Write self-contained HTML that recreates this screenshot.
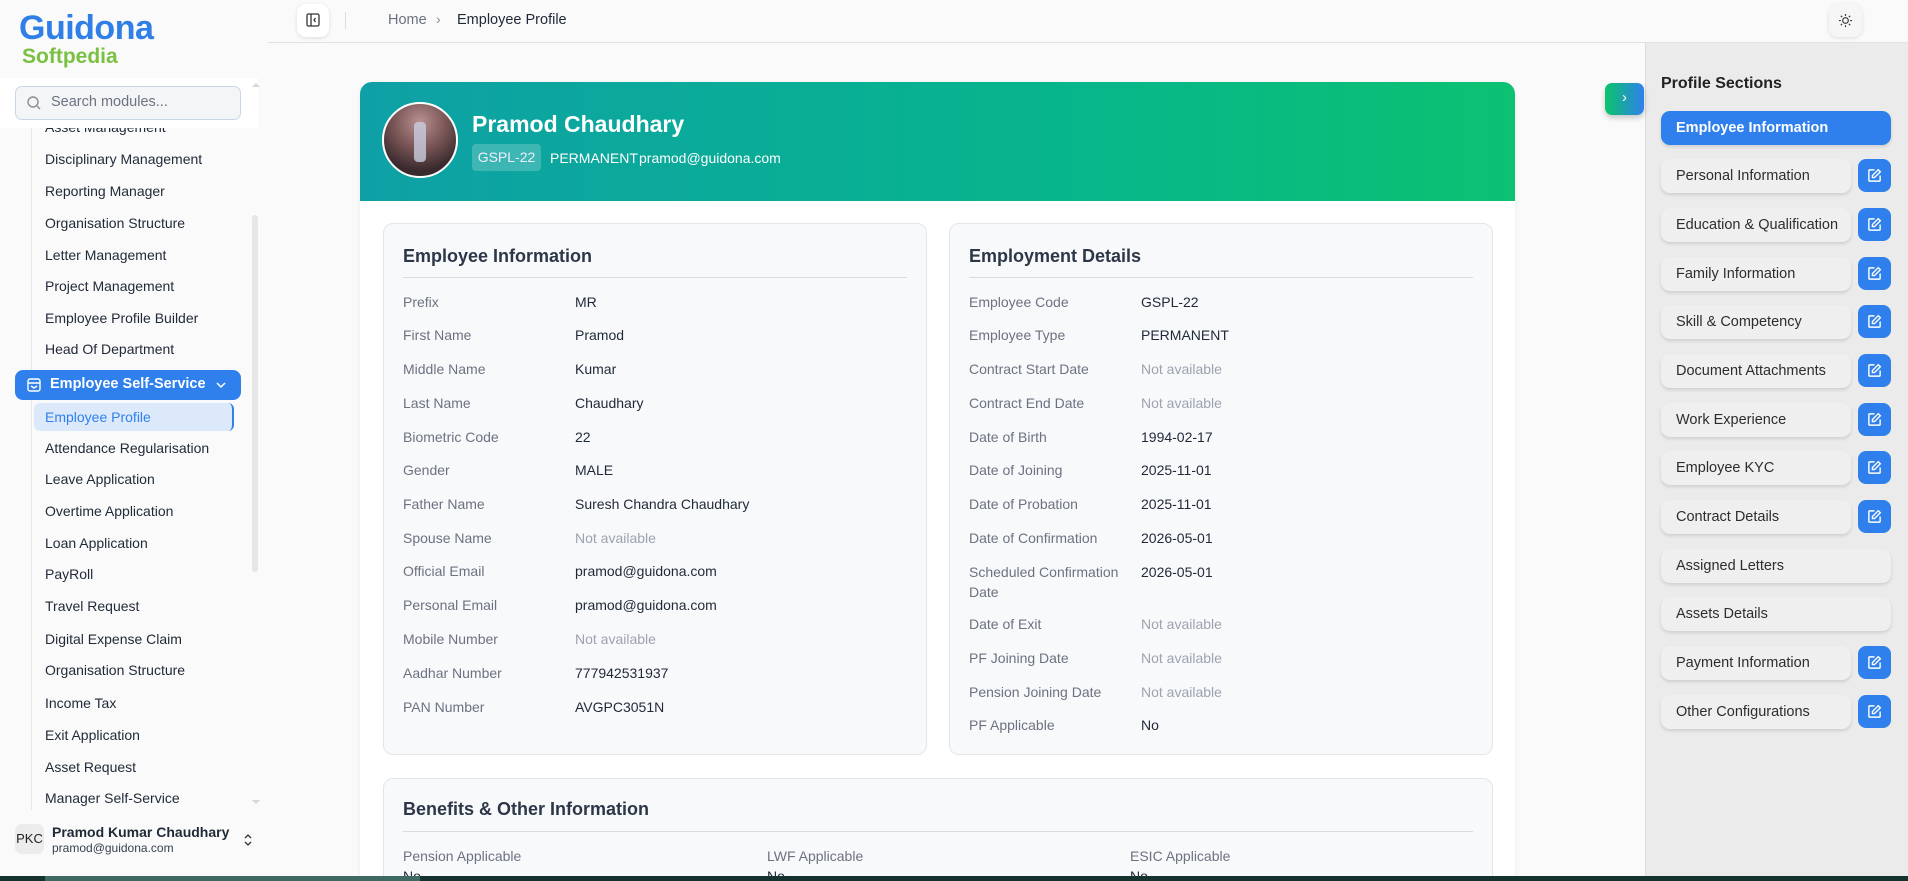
<!DOCTYPE html>
<html><head><meta charset="utf-8"><style>
*{box-sizing:border-box;margin:0;padding:0}
html{width:1908px;height:881px;overflow:hidden}
body{width:1908px;height:881px;overflow:hidden;background:#fafafa;font-family:"Liberation Sans",sans-serif;position:relative;color:#1f2937}
.a{position:absolute;white-space:nowrap}
.si{position:absolute;left:45px;font-size:14px;color:#1f2937;line-height:20px}
.lab{position:absolute;font-size:14px;color:#6b7280;line-height:20px}
.val{position:absolute;font-size:14px;color:#1f2937;line-height:20px}
.na{color:#9ca3af}
.card{position:absolute;background:#f8f9fb;border:1px solid #e3e5e8;border-radius:10px}
.ct{position:absolute;font-size:18px;font-weight:bold;color:#2d3748}
.hr{position:absolute;height:1px;background:#d8dbe0}
.ps{position:absolute;left:1661px;height:34px;border-radius:9px;background:#efefef;box-shadow:0 2px 3px rgba(0,0,0,.12);font-size:14.5px;color:#2d2d2d;line-height:34px;padding-left:15px}
.eb{position:absolute;left:1858px;width:33px;height:33px;border-radius:8px;background:#2f80ed;display:flex;align-items:center;justify-content:center}
</style></head><body>
<!-- sidebar -->
<div class="a" style="left:19px;top:9px;font-size:34px;font-weight:bold;color:#2f7fe6;letter-spacing:-0.5px">Guidona</div>
<div class="a" style="left:22px;top:45px;font-size:21px;font-weight:bold;color:#7ac143">Softpedia</div>
<div class="a" style="left:31px;top:128px;width:1px;height:682px;background:#e3e6ea"></div>
<div class="si" style="top:117px">Asset Management</div>
<div class="a" style="left:0;top:78px;width:258px;height:50px;background:#fff"></div>
<div class="a" style="left:15px;top:86px;width:226px;height:34px;border:1px solid #c9d6ea;border-radius:7px;background:#f4f5f7"></div>
<svg class="a" style="left:26px;top:95px" width="16" height="16" viewBox="0 0 16 16" fill="none" stroke="#8a8f98" stroke-width="1.4"><circle cx="7" cy="7" r="5"/><path d="M11 11l3 3"/></svg>
<div class="a" style="left:51px;top:94px;font-size:14.5px;color:#6b7280">Search modules...</div>
<div class="a" style="left:252px;top:83px;width:0;height:0;border-left:4px solid transparent;border-right:4px solid transparent;border-bottom:4px solid #d6d6d6"></div>
<div class="a" style="left:252px;top:215px;width:6px;height:357px;background:#e6e6e6;border-radius:3px"></div>
<div class="a" style="left:252px;top:800px;width:0;height:0;border-left:4px solid transparent;border-right:4px solid transparent;border-top:4px solid #d6d6d6"></div>
<div class="si" style="top:149px">Disciplinary Management</div>
<div class="si" style="top:181px">Reporting Manager</div>
<div class="si" style="top:213px">Organisation Structure</div>
<div class="si" style="top:245px">Letter Management</div>
<div class="si" style="top:276px">Project Management</div>
<div class="si" style="top:308px">Employee Profile Builder</div>
<div class="si" style="top:339px">Head Of Department</div>
<div class="a" style="left:15px;top:370px;width:226px;height:30px;background:#2f80ed;border-radius:8px"></div>
<svg class="a" style="left:26px;top:377px" width="16" height="16" viewBox="0 0 16 16" fill="none" stroke="#fff" stroke-width="1.4"><rect x="2" y="2" width="12" height="12" rx="2"/><path d="M2 6h12M5 9l3 2 3-2"/></svg>
<div class="a" style="left:50px;top:376px;font-size:14.5px;font-weight:bold;color:#fff">Employee Self-Service</div>
<svg class="a" style="left:215px;top:380px" width="12" height="10" viewBox="0 0 12 10" fill="none" stroke="#fff" stroke-width="1.5"><path d="M2 3l4 4 4-4"/></svg>
<div class="a" style="left:34px;top:403px;width:200px;height:28px;background:#dce9fb;border-radius:6px;border-right:2px solid #2f80ed"></div>
<div class="si" style="top:407px;color:#2f80ed">Employee Profile</div>
<div class="si" style="top:438px">Attendance Regularisation</div>
<div class="si" style="top:469px">Leave Application</div>
<div class="si" style="top:501px">Overtime Application</div>
<div class="si" style="top:533px">Loan Application</div>
<div class="si" style="top:564px">PayRoll</div>
<div class="si" style="top:596px">Travel Request</div>
<div class="si" style="top:629px">Digital Expense Claim</div>
<div class="si" style="top:660px">Organisation Structure</div>
<div class="si" style="top:693px">Income Tax</div>
<div class="si" style="top:725px">Exit Application</div>
<div class="si" style="top:757px">Asset Request</div>
<div class="si" style="top:788px">Manager Self-Service</div>
<div class="a" style="left:0;top:812px;width:268px;height:64px;background:#fafafa"></div>
<div class="a" style="left:15px;top:824px;width:29px;height:30px;background:#ececec;border-radius:7px;font-size:13px;line-height:30px;text-align:center;color:#222">PKC</div>
<div class="a" style="left:52px;top:824px;font-size:14px;font-weight:bold;color:#1f2937">Pramod Kumar Chaudhary</div>
<div class="a" style="left:52px;top:841px;font-size:12px;color:#374151">pramod@guidona.com</div>
<svg class="a" style="left:243px;top:832px" width="10" height="16" viewBox="0 0 10 16" fill="none" stroke="#333" stroke-width="1.3"><path d="M2 6l3-3 3 3M2 10l3 3 3-3"/></svg>
<!-- header -->
<div class="a" style="left:268px;top:42px;width:1640px;height:1px;background:#e2e2e2"></div>
<div class="a" style="left:297px;top:4px;width:32px;height:33px;background:#fff;border-radius:9px;box-shadow:0 1px 4px rgba(0,0,0,.12)"></div>
<svg class="a" style="left:306px;top:13px" width="14" height="14" viewBox="0 0 14 14" fill="none" stroke="#333" stroke-width="1.3"><rect x="1" y="1" width="12" height="12" rx="1.5"/><path d="M5 1v12M9.5 5L8 7l1.5 2"/></svg>
<div class="a" style="left:345px;top:12px;width:1px;height:17px;background:#ddd"></div>
<div class="a" style="left:388px;top:12px;font-size:14.5px;color:#6b7280">Home</div>
<div class="a" style="left:436px;top:11px;font-size:14px;color:#888">›</div>
<div class="a" style="left:457px;top:12px;font-size:14.5px;color:#1f2937">Employee Profile</div>
<div class="a" style="left:1829px;top:4px;width:33px;height:33px;background:#f6f6f6;border-radius:9px;box-shadow:0 1px 4px rgba(0,0,0,.12)"></div>
<svg class="a" style="left:1838px;top:13px" width="15" height="15" viewBox="0 0 16 16" fill="none" stroke="#333" stroke-width="1.2"><circle cx="8" cy="8" r="3"/><path d="M8 1v2M8 13v2M1 8h2M13 8h2M3 3l1.4 1.4M11.6 11.6L13 13M3 13l1.4-1.4M11.6 4.4L13 3"/></svg>
<!-- right panel -->
<div class="a" style="left:1645px;top:43px;width:263px;height:838px;background:#ebebeb;border-left:1px solid #dcdcdc"></div>
<div class="a" style="left:1605px;top:83px;width:39px;height:32px;border-radius:7px;background:linear-gradient(90deg,#0bc46a,#2f80ed);box-shadow:0 3px 6px rgba(0,0,0,.2);color:#fff;font-size:15px;text-align:center;line-height:30px">›</div>
<div class="a" style="left:1661px;top:75px;font-size:16px;font-weight:bold;color:#222">Profile Sections</div>
<div class="ps" style="top:111px;width:230px;background:#2f80ed;color:#fff;font-weight:bold">Employee Information</div>
<div class="ps" style="top:159px;width:190px">Personal Information</div><div class="eb" style="top:159px"><svg width="15" height="15" viewBox="0 0 16 16" fill="none" stroke="#fff" stroke-width="1.5"><path d="M8 2H3a1 1 0 00-1 1v10a1 1 0 001 1h10a1 1 0 001-1V8"/><path d="M12 1.8l2.2 2.2L8 10.2H5.8V8z"/></svg></div>
<div class="ps" style="top:208px;width:190px">Education &amp; Qualification</div><div class="eb" style="top:208px"><svg width="15" height="15" viewBox="0 0 16 16" fill="none" stroke="#fff" stroke-width="1.5"><path d="M8 2H3a1 1 0 00-1 1v10a1 1 0 001 1h10a1 1 0 001-1V8"/><path d="M12 1.8l2.2 2.2L8 10.2H5.8V8z"/></svg></div>
<div class="ps" style="top:257px;width:190px">Family Information</div><div class="eb" style="top:257px"><svg width="15" height="15" viewBox="0 0 16 16" fill="none" stroke="#fff" stroke-width="1.5"><path d="M8 2H3a1 1 0 00-1 1v10a1 1 0 001 1h10a1 1 0 001-1V8"/><path d="M12 1.8l2.2 2.2L8 10.2H5.8V8z"/></svg></div>
<div class="ps" style="top:305px;width:190px">Skill &amp; Competency</div><div class="eb" style="top:305px"><svg width="15" height="15" viewBox="0 0 16 16" fill="none" stroke="#fff" stroke-width="1.5"><path d="M8 2H3a1 1 0 00-1 1v10a1 1 0 001 1h10a1 1 0 001-1V8"/><path d="M12 1.8l2.2 2.2L8 10.2H5.8V8z"/></svg></div>
<div class="ps" style="top:354px;width:190px">Document Attachments</div><div class="eb" style="top:354px"><svg width="15" height="15" viewBox="0 0 16 16" fill="none" stroke="#fff" stroke-width="1.5"><path d="M8 2H3a1 1 0 00-1 1v10a1 1 0 001 1h10a1 1 0 001-1V8"/><path d="M12 1.8l2.2 2.2L8 10.2H5.8V8z"/></svg></div>
<div class="ps" style="top:403px;width:190px">Work Experience</div><div class="eb" style="top:403px"><svg width="15" height="15" viewBox="0 0 16 16" fill="none" stroke="#fff" stroke-width="1.5"><path d="M8 2H3a1 1 0 00-1 1v10a1 1 0 001 1h10a1 1 0 001-1V8"/><path d="M12 1.8l2.2 2.2L8 10.2H5.8V8z"/></svg></div>
<div class="ps" style="top:451px;width:190px">Employee KYC</div><div class="eb" style="top:451px"><svg width="15" height="15" viewBox="0 0 16 16" fill="none" stroke="#fff" stroke-width="1.5"><path d="M8 2H3a1 1 0 00-1 1v10a1 1 0 001 1h10a1 1 0 001-1V8"/><path d="M12 1.8l2.2 2.2L8 10.2H5.8V8z"/></svg></div>
<div class="ps" style="top:500px;width:190px">Contract Details</div><div class="eb" style="top:500px"><svg width="15" height="15" viewBox="0 0 16 16" fill="none" stroke="#fff" stroke-width="1.5"><path d="M8 2H3a1 1 0 00-1 1v10a1 1 0 001 1h10a1 1 0 001-1V8"/><path d="M12 1.8l2.2 2.2L8 10.2H5.8V8z"/></svg></div>
<div class="ps" style="top:549px;width:230px">Assigned Letters</div>
<div class="ps" style="top:597px;width:230px">Assets Details</div>
<div class="ps" style="top:646px;width:190px">Payment Information</div><div class="eb" style="top:646px"><svg width="15" height="15" viewBox="0 0 16 16" fill="none" stroke="#fff" stroke-width="1.5"><path d="M8 2H3a1 1 0 00-1 1v10a1 1 0 001 1h10a1 1 0 001-1V8"/><path d="M12 1.8l2.2 2.2L8 10.2H5.8V8z"/></svg></div>
<div class="ps" style="top:695px;width:190px">Other Configurations</div><div class="eb" style="top:695px"><svg width="15" height="15" viewBox="0 0 16 16" fill="none" stroke="#fff" stroke-width="1.5"><path d="M8 2H3a1 1 0 00-1 1v10a1 1 0 001 1h10a1 1 0 001-1V8"/><path d="M12 1.8l2.2 2.2L8 10.2H5.8V8z"/></svg></div>
<!-- main card -->
<div class="a" style="left:360px;top:82px;width:1155px;height:799px;background:#fff;border-radius:12px 12px 0 0;box-shadow:0 1px 4px rgba(0,0,0,.06)"></div>
<div class="a" style="left:360px;top:82px;width:1155px;height:119px;border-radius:12px 12px 0 0;background:linear-gradient(90deg,#0ea0a6,#07b58c 60%,#0cc172)"></div>
<div class="a" style="left:382px;top:102px;width:76px;height:76px;border-radius:50%;border:2px solid #fff;background:radial-gradient(circle at 50% 25%,#b89090,#7a5656 40%,#3a2a2e 75%)"></div>
<div class="a" style="left:414px;top:122px;width:12px;height:40px;background:#c9cde0;border-radius:4px;opacity:.8"></div>
<div class="a" style="left:472px;top:111px;font-size:23px;font-weight:bold;color:#fff">Pramod Chaudhary</div>
<div class="a" style="left:472px;top:144px;width:69px;height:27px;background:rgba(255,255,255,.2);border-radius:4px;color:#eef;font-size:14px;line-height:27px;text-align:center">GSPL-22</div>
<div class="a" style="left:550px;top:150px;font-size:14px;color:#fff">PERMANENT</div>
<div class="a" style="left:639px;top:150px;font-size:14px;color:#fff">pramod@guidona.com</div>
<!-- card 1 -->
<div class="card" style="left:383px;top:223px;width:544px;height:532px"></div>
<div class="ct" style="left:403px;top:246px">Employee Information</div>
<div class="hr" style="left:403px;top:277px;width:504px"></div>
<div class="lab" style="left:403px;top:292px">Prefix</div><div class="val" style="left:575px;top:292px">MR</div>
<div class="lab" style="left:403px;top:325px">First Name</div><div class="val" style="left:575px;top:325px">Pramod</div>
<div class="lab" style="left:403px;top:359px">Middle Name</div><div class="val" style="left:575px;top:359px">Kumar</div>
<div class="lab" style="left:403px;top:393px">Last Name</div><div class="val" style="left:575px;top:393px">Chaudhary</div>
<div class="lab" style="left:403px;top:427px">Biometric Code</div><div class="val" style="left:575px;top:427px">22</div>
<div class="lab" style="left:403px;top:460px">Gender</div><div class="val" style="left:575px;top:460px">MALE</div>
<div class="lab" style="left:403px;top:494px">Father Name</div><div class="val" style="left:575px;top:494px">Suresh Chandra Chaudhary</div>
<div class="lab" style="left:403px;top:528px">Spouse Name</div><div class="val na" style="left:575px;top:528px">Not available</div>
<div class="lab" style="left:403px;top:561px">Official Email</div><div class="val" style="left:575px;top:561px">pramod@guidona.com</div>
<div class="lab" style="left:403px;top:595px">Personal Email</div><div class="val" style="left:575px;top:595px">pramod@guidona.com</div>
<div class="lab" style="left:403px;top:629px">Mobile Number</div><div class="val na" style="left:575px;top:629px">Not available</div>
<div class="lab" style="left:403px;top:663px">Aadhar Number</div><div class="val" style="left:575px;top:663px">777942531937</div>
<div class="lab" style="left:403px;top:697px">PAN Number</div><div class="val" style="left:575px;top:697px">AVGPC3051N</div>
<!-- card 2 -->
<div class="card" style="left:949px;top:223px;width:544px;height:532px"></div>
<div class="ct" style="left:969px;top:246px">Employment Details</div>
<div class="hr" style="left:969px;top:277px;width:504px"></div>
<div class="lab" style="left:969px;top:292px">Employee Code</div><div class="val" style="left:1141px;top:292px">GSPL-22</div>
<div class="lab" style="left:969px;top:325px">Employee Type</div><div class="val" style="left:1141px;top:325px">PERMANENT</div>
<div class="lab" style="left:969px;top:359px">Contract Start Date</div><div class="val na" style="left:1141px;top:359px">Not available</div>
<div class="lab" style="left:969px;top:393px">Contract End Date</div><div class="val na" style="left:1141px;top:393px">Not available</div>
<div class="lab" style="left:969px;top:427px">Date of Birth</div><div class="val" style="left:1141px;top:427px">1994-02-17</div>
<div class="lab" style="left:969px;top:460px">Date of Joining</div><div class="val" style="left:1141px;top:460px">2025-11-01</div>
<div class="lab" style="left:969px;top:494px">Date of Probation</div><div class="val" style="left:1141px;top:494px">2025-11-01</div>
<div class="lab" style="left:969px;top:528px">Date of Confirmation</div><div class="val" style="left:1141px;top:528px">2026-05-01</div>
<div class="lab" style="left:969px;top:562px">Scheduled Confirmation<br>Date</div><div class="val" style="left:1141px;top:562px">2026-05-01</div>
<div class="lab" style="left:969px;top:614px">Date of Exit</div><div class="val na" style="left:1141px;top:614px">Not available</div>
<div class="lab" style="left:969px;top:648px">PF Joining Date</div><div class="val na" style="left:1141px;top:648px">Not available</div>
<div class="lab" style="left:969px;top:682px">Pension Joining Date</div><div class="val na" style="left:1141px;top:682px">Not available</div>
<div class="lab" style="left:969px;top:715px">PF Applicable</div><div class="val" style="left:1141px;top:715px">No</div>
<!-- card 3 -->
<div class="card" style="left:383px;top:778px;width:1110px;height:103px;border-bottom:none;border-radius:10px 10px 0 0"></div>
<div class="ct" style="left:403px;top:799px">Benefits &amp; Other Information</div>
<div class="hr" style="left:403px;top:831px;width:1070px"></div>
<div class="lab" style="left:403px;top:846px">Pension Applicable</div><div class="val" style="left:403px;top:866px">No</div>
<div class="lab" style="left:767px;top:846px">LWF Applicable</div><div class="val" style="left:767px;top:866px">No</div>
<div class="lab" style="left:1130px;top:846px">ESIC Applicable</div><div class="val" style="left:1130px;top:866px">No</div>
<!-- bottom scrollbar -->
<div class="a" style="left:0;top:876px;width:1908px;height:5px;background:#15322e"></div>
<div class="a" style="left:45px;top:876px;width:375px;height:5px;background:#3f6a63"></div>
</body></html>
